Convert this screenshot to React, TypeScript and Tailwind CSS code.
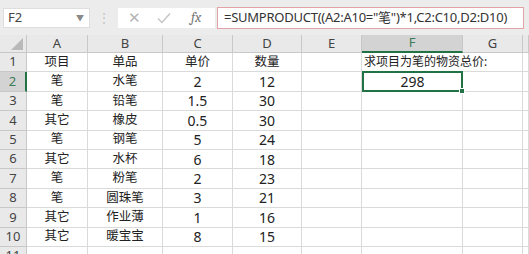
import React from 'react';

const widths = [27, 61, 75, 70, 69, 60, 101, 60, 6];
const letters = ['A', 'B', 'C', 'D', 'E', 'F', 'G', ''];

const rows: string[][] = [
  ['项目', '单品', '单价', '数量'],
  ['笔', '水笔', '2', '12'],
  ['笔', '铅笔', '1.5', '30'],
  ['其它', '橡皮', '0.5', '30'],
  ['笔', '钢笔', '5', '24'],
  ['其它', '水杯', '6', '18'],
  ['笔', '粉笔', '2', '23'],
  ['笔', '圆珠笔', '3', '21'],
  ['其它', '作业薄', '1', '16'],
  ['其它', '暖宝宝', '8', '15'],
];

const font = { fontFamily: '"Noto Sans", "Noto Sans CJK SC", sans-serif' };

const isNum = (s: string) => /^[\d.]+$/.test(s);

const FormulaBar = () => (
  <div className="flex h-[35px] items-center bg-[#ececec] pl-[3px]">
    <div className="flex h-[20px] w-[87px] items-center justify-between border border-[#dedede] bg-white pl-[4px] pr-[5px] text-[13px] text-[#444]">
      <span>F2</span>
      <span className="text-[8px] text-[#888]">▼</span>
    </div>
    <div className="flex w-[28px] justify-center text-[12px] text-[#c2c2c2]">⋮</div>
    <div className="flex h-[20px] w-[97px] items-center bg-white text-[#b5b5b5]">
      <span className="ml-[10px] text-[15px]">✕</span>
      <svg className="ml-[16px]" width="14" height="12" viewBox="0 0 14 12">
        <path d="M1 6.5 L5 10.5 L13 1.5" stroke="#c4c4c4" strokeWidth="1.4" fill="none" />
      </svg>
      <span className="ml-[20px] font-serif text-[14px] italic text-[#777]">fx</span>
    </div>
    <div className="ml-[2px] flex h-[22px] w-[307px] items-center border border-[#e3a3a6] bg-white pl-[6px] text-[13px] tracking-[-0.25px] whitespace-nowrap text-[#333]">
      =SUMPRODUCT((A2:A10="笔")*1,C2:C10,D2:D10)
    </div>
  </div>
);

const HeaderRow = () => (
  <div className="flex h-[18px] bg-[#e9e9e9] text-[13px] text-[#444]">
    <div
      className="relative shrink-0 border-r border-b border-[#c8c8c8]"
      style={{ width: widths[0] }}
    >
      <svg className="absolute right-[3px] bottom-[2px]" width="12" height="12" viewBox="0 0 12 12">
        <path d="M12 0 L12 12 L0 12 Z" fill="#b9b9b9" />
      </svg>
    </div>
    {letters.map((l, i) => (
      <div
        key={i}
        className={
          l === 'F'
            ? 'flex shrink-0 items-center justify-center border-r border-b-2 border-r-[#c8c8c8] border-b-[#217346] bg-[#d3d3d3] text-[#3d7a57]'
            : 'flex shrink-0 items-center justify-center border-r border-b border-[#c8c8c8]'
        }
        style={{ width: widths[i + 1] }}
      >
        {l}
      </div>
    ))}
  </div>
);

const DataRow = ({ n, cells }: { n: number; cells: string[] }) => (
  <div className="flex h-[19.4px] text-[#222]">
    <div
      className={
        n === 2
          ? 'flex shrink-0 items-center justify-center border-r-2 border-b border-r-[#217346] border-b-[#c8c8c8] bg-[#d3d3d3] text-[13px] text-[#3d7a57]'
          : 'flex shrink-0 items-center justify-center border-r border-b border-[#c8c8c8] bg-[#e9e9e9] text-[13px] text-[#444]'
      }
      style={{ width: widths[0] }}
    >
      {n}
    </div>
    {letters.map((l, i) => {
      const w = widths[i + 1];
      if (l === 'F' && n === 1) {
        return (
          <div key={i} className="flex shrink-0 items-center border-b border-[#dadada] pl-[2px]" style={{ width: w }}>
            <span className="relative z-10 whitespace-nowrap text-[12px]">求项目为笔的物资总价:</span>
          </div>
        );
      }
      if (l === 'F' && n === 2) {
        return (
          <div
            key={i}
            className="relative flex shrink-0 items-center justify-center border-2 border-[#217346] text-[14px]"
            style={{ width: w, marginTop: -1 }}
          >
            298
            <div className="absolute right-[-4px] bottom-[-4px] h-[6px] w-[6px] border border-white bg-[#217346]" />
          </div>
        );
      }
      const v = cells[i] ?? '';
      return (
        <div
          key={i}
          className={
            isNum(v)
              ? 'flex shrink-0 items-center justify-center border-r border-b border-[#dadada] text-[14px]'
              : 'flex shrink-0 items-center justify-center border-r border-b border-[#dadada] text-[12.5px]'
          }
          style={{ width: w }}
        >
          {v}
        </div>
      );
    })}
  </div>
);

export default function App() {
  return (
    <div className="h-[254px] w-[529px] overflow-hidden bg-white" style={font}>
      <FormulaBar />
      <HeaderRow />
      {rows.map((r, i) => (
        <DataRow key={i} n={i + 1} cells={r} />
      ))}
      <DataRow n={11} cells={[]} />
    </div>
  );
}
